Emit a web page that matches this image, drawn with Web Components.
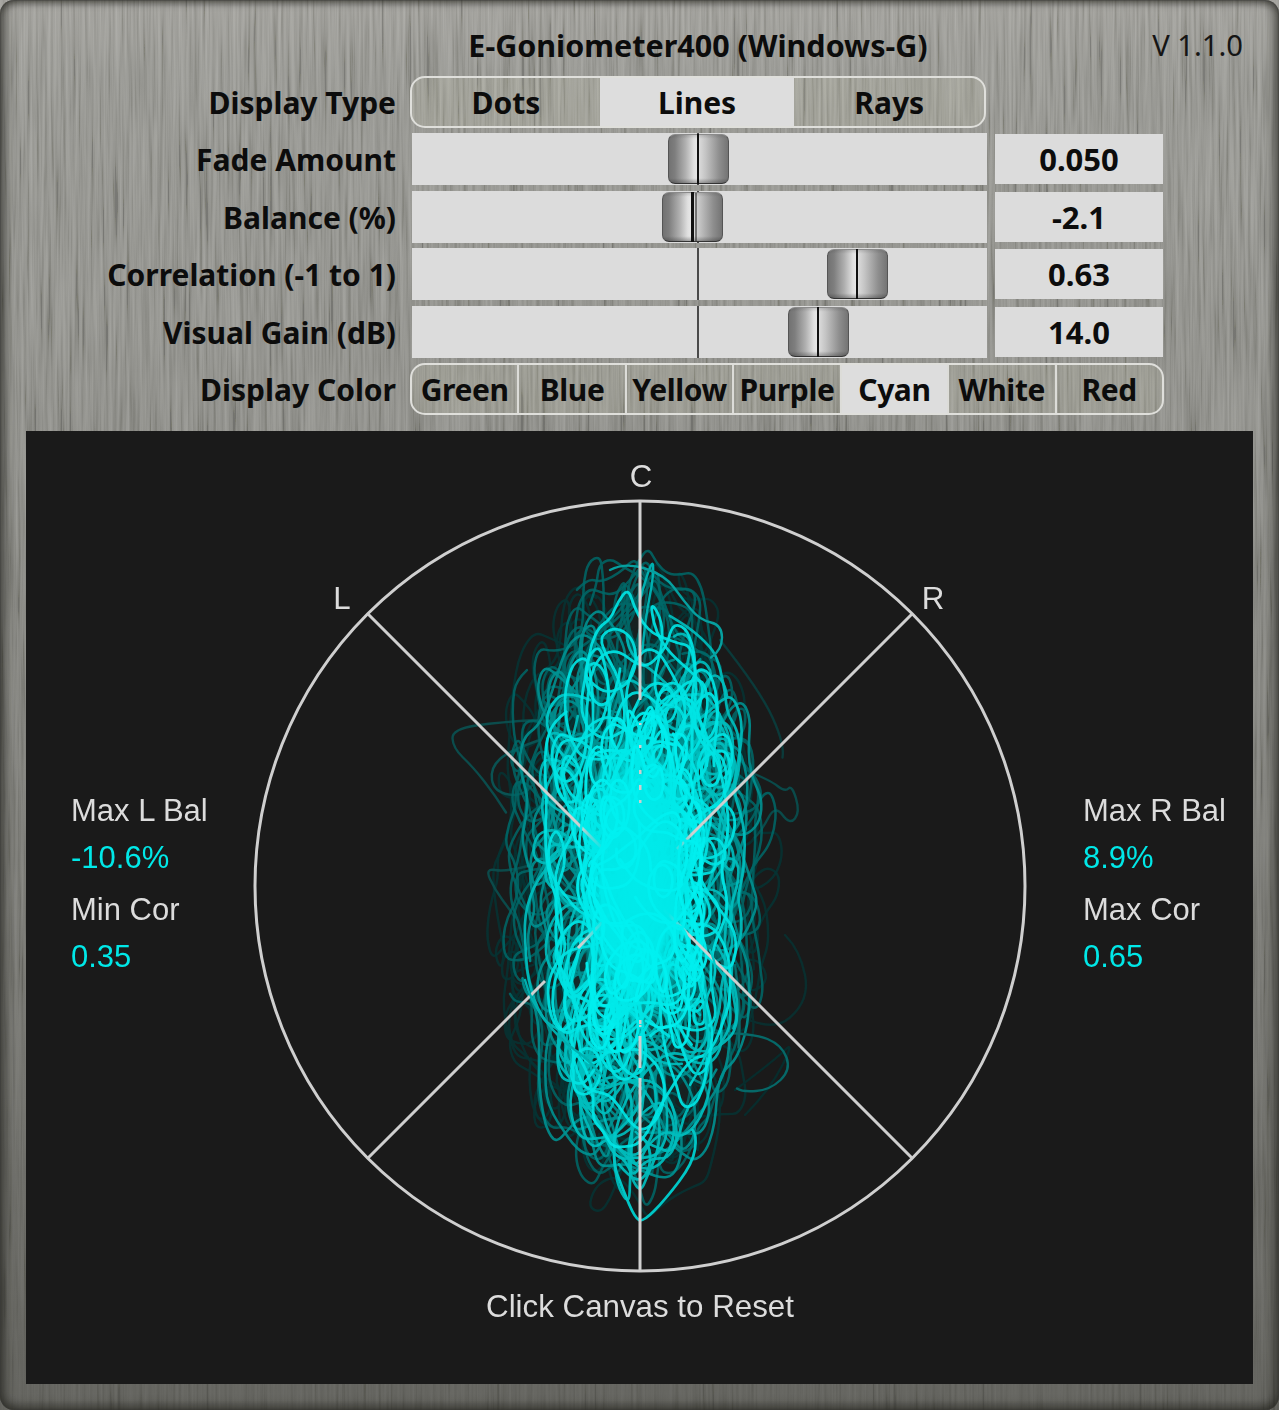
<!DOCTYPE html>
<html lang="en"><head><meta charset="utf-8"><title>E-Goniometer400</title>
<style>html,body{margin:0;padding:0;background:#555}</style></head>
<body>
<gonio-app>
  <metal-backdrop></metal-backdrop>
  <gonio-header title-text="E-Goniometer400 (Windows-G)" version="V 1.1.0"></gonio-header>
  <control-grid>
    <row-label>Display Type</row-label>
    <seg-control class="type" active="1" items="Dots,Lines,Rays" weights="188,195,190"></seg-control>
    <row-label>Fade Amount</row-label>
    <gonio-slider pos="286"></gonio-slider>
    <value-box>0.050</value-box>
    <row-label>Balance (%)</row-label>
    <gonio-slider pos="280.5" ghost></gonio-slider>
    <value-box>-2.1</value-box>
    <row-label>Correlation (-1 to 1)</row-label>
    <gonio-slider pos="445"></gonio-slider>
    <value-box>0.63</value-box>
    <row-label>Visual Gain (dB)</row-label>
    <gonio-slider pos="406"></gonio-slider>
    <value-box>14.0</value-box>
    <row-label>Display Color</row-label>
    <seg-control class="color" active="4" separators items="Green,Blue,Yellow,Purple,Cyan,White,Red"></seg-control>
  </control-grid>
  <gonio-scope></gonio-scope>
</gonio-app>
<script>
const FONT = '"Noto Sans","Open Sans","Liberation Sans",sans-serif';
function def(name, css, html, init){
  customElements.define(name, class extends HTMLElement{
    constructor(){super();this.attachShadow({mode:'open'});}
    connectedCallback(){
      this.shadowRoot.innerHTML='<style>'+css+'</style>'+(typeof html==='function'?html(this):html);
      if(init)init(this,this.shadowRoot);
    }
  });
}
def('gonio-app',`
  :host{display:block;position:relative;width:1279px;height:1410px;overflow:hidden;font-family:${FONT};color:#0c0c0c}
  .wrap{position:relative;display:flex;flex-direction:column;height:100%}
  .bevel{position:absolute;inset:0;pointer-events:none;border-radius:14px;
    box-shadow:inset 0 0 0 1px rgba(60,60,55,.3),inset 8px 0 10px -2px rgba(35,35,30,.55),inset -8px 0 10px -2px rgba(35,35,30,.55),inset 0 -7px 9px -2px rgba(35,35,30,.45),inset 0 6px 7px -3px rgba(40,40,35,.5)}
`,`<div class="wrap"><slot></slot></div><div class="bevel"></div>`);

def('metal-backdrop',`
  :host{position:absolute;inset:0;display:block;background:linear-gradient(180deg,#a09f9a 0,#969691 5%,#8f8f8a 25%,#7c7c77 55%,#5e5e59 100%)}
  svg{position:absolute;inset:0;width:100%;height:100%;opacity:.17;display:block;-webkit-mask-image:linear-gradient(180deg,#000 35%,rgba(0,0,0,.45) 100%);mask-image:linear-gradient(180deg,#000 35%,rgba(0,0,0,.45) 100%)}
`,`<svg xmlns="http://www.w3.org/2000/svg" viewBox="0 0 1279 1410" preserveAspectRatio="none">
  <filter id="brush" x="0" y="0" width="100%" height="100%">
    <feTurbulence type="fractalNoise" baseFrequency="0.33 0.008" numOctaves="3" seed="7"/>
    <feColorMatrix type="matrix" values="1.7 0 0 0 -.39  1.7 0 0 0 -.39  1.7 0 0 0 -.41  0 0 0 0 1"/>
  </filter>
  <rect width="1279" height="1410" filter="url(#brush)"/></svg>`);

def('gonio-header',`
  :host{display:grid;grid-template-columns:1fr auto 1fr;align-items:center;height:54px;padding-top:18px;padding-bottom:4px;box-sizing:content-box;position:relative}
  .t{grid-column:2;font-weight:700;font-size:30.5px;white-space:nowrap;margin-left:117px}
  .v{grid-column:3;justify-self:end;font-size:29.2px;margin-right:36px;color:#151515;white-space:nowrap}
`,h=>`<div class="t">${h.getAttribute('title-text')}</div><div class="v">${h.getAttribute('version')}</div>`);

def('control-grid',`
  :host{display:grid;grid-template-columns:396px 591px 176px;column-gap:0;grid-auto-rows:52px;row-gap:5.4px;position:relative}
  ::slotted(row-label){grid-column:1}
  ::slotted(gonio-slider){grid-column:2;margin-left:16px}
  ::slotted(value-box){grid-column:3;margin-left:8px}
  ::slotted(seg-control.type){grid-column:2;margin-left:14px;margin-right:1px}
  ::slotted(seg-control.color){grid-column:2 / span 2;margin-left:14px;margin-right:-1px}
`,`<slot></slot>`);

def('row-label',`
  :host{display:flex;justify-content:flex-end;align-items:center;font-weight:700;font-size:30px;white-space:nowrap;height:52px;padding-top:1px;box-sizing:border-box}
`,`<slot></slot>`);

def('value-box',`
  :host{display:flex;justify-content:center;align-items:center;font-weight:700;font-size:31px;background:#dcdcdc;height:50px;margin-top:1px}
`,`<slot></slot>`);

def('seg-control',`
  :host{display:block;height:52px;box-sizing:border-box;border:2px solid #dfdfdb;border-radius:15px;overflow:hidden}
  .row{display:flex;height:100%}
  .c{display:flex;align-items:center;justify-content:center;font-weight:700;font-size:30px;white-space:nowrap;background:rgba(255,255,215,.09);min-width:0;padding-top:1px;box-sizing:border-box}
  .c.on{background:#dddddd}
  .sep .c+.c{border-left:2.5px solid #dcdcd8}
  .sep{letter-spacing:-.4px}
`,h=>{
  const items=h.getAttribute('items').split(','),a=+h.getAttribute('active');
  const w=(h.getAttribute('weights')||'').split(',');
  return `<div class="row ${h.hasAttribute('separators')?'sep':''}">${items.map((t,i)=>`<div class="c ${i===a?'on':''}" style="flex:${w[i]||1} 1 0">${t}</div>`).join('')}</div>`;
});

def('gonio-slider',`
  :host{display:block;position:relative;height:52px;background:#dcdcdc}
  .mid{position:absolute;left:285px;top:0;bottom:0;width:1.6px;background:#4a4a4a}
  .thumb{position:absolute;top:1px;width:61px;height:50px;box-sizing:border-box;border-radius:7px;border:1.5px solid #555;border-top-color:#8a8a8a;border-bottom-color:#333;
    background:linear-gradient(180deg,rgba(60,60,60,.18) 0,rgba(0,0,0,0) 8%,rgba(0,0,0,0) 90%,rgba(40,40,40,.35) 100%),
    linear-gradient(90deg,#727272 0,#7e7e7e 10%,#b0b0b0 28%,#e0e0e0 42%,#e8e8e8 48%,#d6d6d6 53%,#c4c4c4 62%,#8e8e8e 85%,#747474 100%)}
  .thumb i{position:absolute;left:50%;top:-1px;bottom:-1px;width:2.2px;margin-left:-1.1px;background:#111}
  .ghost{position:absolute;left:283px;top:2px;bottom:2px;width:1.5px;background:rgba(40,40,40,.55)}
`,h=>{const p=+h.getAttribute('pos');
  return `<div class="mid"></div><div class="thumb" style="left:${p-30.5}px"><i></i></div>${h.hasAttribute('ghost')?'<div class="ghost"></div>':''}`;});

def('scope-readout',`
  :host{display:flex;flex-direction:column;font-family:"Liberation Sans",Arial,sans-serif;font-size:31px;line-height:47px;color:#dcdcdc}
  .v{color:#00e8e8}
`,h=>`<div>${h.getAttribute('label')}</div><div class="v">${h.getAttribute('value')}</div>`);

def('gonio-scope',`
  :host{display:block;position:relative;width:1227px;height:953px;margin:16px 26px 26px;background:#1a1a1a;font-family:"Liberation Sans",Arial,sans-serif;font-size:31.3px;color:#dcdcdc}
  canvas{position:absolute;inset:0;display:block}
  .tick{position:absolute;transform:translate(-50%,-50%);white-space:nowrap;line-height:1}
  .col{position:absolute;top:356px;display:flex;flex-direction:column;gap:5px}
`,`<canvas width="1227" height="953"></canvas>
  <div class="tick" style="left:615px;top:46px">C</div>
  <div class="tick" style="left:316px;top:168px">L</div>
  <div class="tick" style="left:907px;top:168px">R</div>
  <div class="col" style="left:45px"><scope-readout label="Max L Bal" value="-10.6%"></scope-readout><scope-readout label="Min Cor" value="0.35"></scope-readout></div>
  <div class="col" style="left:1057px"><scope-readout label="Max R Bal" value="8.9%"></scope-readout><scope-readout label="Max Cor" value="0.65"></scope-readout></div>
  <div class="tick" style="left:614px;top:876px">Click Canvas to Reset</div>`,
(h,s)=>drawScope(s.querySelector('canvas')));

function drawScope(cv){
  const g=cv.getContext('2d');
  g.translate(-26,-431);
  const CX=640,CY=886,R=385;
  let seed=4242;
  const rnd=()=>{seed|=0;seed=seed+0x6D2B79F5|0;let t=Math.imul(seed^seed>>>15,1|seed);t=t+Math.imul(t^t>>>7,61|t)^t;return((t^t>>>14)>>>0)/4294967296;};
  const gauss=()=>{let u=0,v=0;while(!u)u=rnd();while(!v)v=rnd();return Math.sqrt(-2*Math.log(u))*Math.cos(6.2832*v);};

  function smooth(pts){
    g.beginPath();g.moveTo(pts[0][0],pts[0][1]);
    for(let i=1;i<pts.length-1;i++){
      g.quadraticCurveTo(pts[i][0],pts[i][1],(pts[i][0]+pts[i+1][0])/2,(pts[i][1]+pts[i+1][1])/2);
    }
    g.stroke();
  }
  // a wandering, looping pen that steers back whenever it leaves a tall egg
  function burst(n,ax,ay,width,color,speed){
    g.strokeStyle=color;g.lineWidth=width;g.lineJoin='round';g.lineCap='round';
    const sc=.78+rnd()*.24, w=ax*sc, hh=ay*sc;
    const clampV=(v,m)=>Math.max(-m,Math.min(m,v));
    let x=clampV(gauss()*w*.5,w*.8),y=clampV(gauss()*hh*.55,hh*.85),th=rnd()*6.2832,om=0;
    const s=speed||14;
    const pts=[];
    for(let i=0;i<n;i++){
      om=om*.85+gauss()*.27;
      th+=om;
      const t=Math.min(1,Math.abs(y)/hh);
      const lim=w*Math.pow(1-t*t,.55)+4;
      if(Math.abs(y)>hh){
        const want=Math.atan2(-y,-x*.3);
        let d=want-th;while(d>Math.PI)d-=6.2832;while(d<-Math.PI)d+=6.2832;
        th+=d*.7;om*=.4;
      }else if(Math.abs(x)>lim){
        const want=Math.atan2(-y*.6,-x);
        let d=want-th;while(d>Math.PI)d-=6.2832;while(d<-Math.PI)d+=6.2832;
        th+=d*.42;
      }
      x+=Math.cos(th)*s*.9;
      y+=Math.sin(th)*s*1.55;
      pts.push([CX+x,CY+y]);
    }
    smooth(pts);
  }
  function hand(points,color,w){
    g.strokeStyle=color;g.lineWidth=w||2.4;g.lineJoin='round';g.lineCap='round';
    smooth(points);
  }
  function halo(cx,cy,rx,ry,stops){
    g.save();g.translate(cx,cy);g.scale(rx,ry);
    const gr=g.createRadialGradient(0,0,0,0,0,1);
    stops.forEach(s=>gr.addColorStop(s[0],s[1]));
    g.fillStyle=gr;g.beginPath();g.arc(0,0,1,0,6.2832);g.fill();g.restore();
  }
  halo(CX-2,CY-8,112,310,[[0,'rgba(0,150,150,.55)'],[.5,'rgba(0,115,115,.3)'],[1,'rgba(0,70,70,0)']]);

  // oldest, darkest strands
  for(let i=0;i<24;i++)burst(70,136,340,2.4,'rgba(6,52,52,.85)');
  hand([[537,720],[500,722],[452,729],[453,748],[473,767],[495,795],[517,830]],'#0b4c4c');
  hand([[540,740],[510,750],[490,768],[494,792],[523,797],[540,775]],'#0a5252');
  hand([[528,866],[505,872],[485,868],[495,890],[510,910],[520,925]],'#0b4a4a');
  hand([[745,770],[770,780],[785,792],[792,785],[800,812],[790,825],[775,805],[762,830],[748,845]],'#0a4a4a');
  hand([[720,640],[760,690],[785,745],[780,770]],'#0b3a3a');
  hand([[730,1010],[770,1035],[810,1000],[800,950],[770,920]],'#0a2e2e');
  hand([[735,1090],[775,1060],[795,1040],[770,1090],[720,1140]],'#082c2c');
  for(let i=0;i<26;i++)burst(60,130,338,2.5,'rgba(0,105,105,.85)');
  for(let i=0;i<22;i++)burst(55,116,335,2.6,'rgba(0,145,145,.9)');
  hand([[715,1033],[753,1033],[782,1045],[791,1070],[770,1090],[742,1092],[732,1085]],'#066868');
  hand([[735,965],[742,1010],[735,1085]],'#086a6a');

  // newer strands, brightening toward the centre
  for(let i=0;i<16;i++)burst(55,100,330,2.7,'rgba(0,190,190,.92)');
  hand([[590,700],[565,690],[548,708],[546,730],[565,760],[590,775]],'#00c4c4',2.8);
  hand([[615,1133],[612,1160],[623,1190],[635,1218],[643,1222],[665,1200],[693,1163],[697,1135],[688,1125]],'#00c6c6',2.8);
  hand([[640,600],[652,556],[654,575],[645,620],[640,680]],'#00b0b0');
  hand([[610,570],[625,562],[665,575],[683,600],[700,620],[722,625],[722,650],[700,665]],'#06a0a0');
  for(let i=0;i<18;i++)burst(50,84,290,2.8,'rgba(0,228,228,.92)');
  for(let i=0;i<18;i++)burst(45,58,195,2.8,'rgba(0,238,238,.95)',12);

  // scale lines sit over all but the hottest core
  g.strokeStyle='#cfcfcf';g.lineWidth=3;g.lineCap='butt';
  g.beginPath();g.arc(CX,CY,R,0,6.2832);g.stroke();
  const d=R*Math.SQRT1_2;
  const seg=(a,b,c,e)=>{g.moveTo(a,b);g.lineTo(c,e);};
  g.beginPath();
  seg(CX,CY-R,CX,CY-186);seg(CX,CY+150,CX,CY+182);seg(CX,CY+192,CX,CY+R);
  seg(CX-d,CY-d,CX-33,CY-33);seg(CX+d,CY-d,CX+37,CY-37);
  seg(CX-d,CY+d,CX-95,CY+95);seg(CX-62,CY+62,CX-30,CY+28);seg(CX+d,CY+d,CX+24,CY+24);
  g.stroke();

  halo(CX-4,CY-6,58,160,[[0,'rgba(0,235,235,1)'],[.6,'rgba(0,233,233,.98)'],[.85,'rgba(0,228,228,.5)'],[1,'rgba(0,220,220,0)']]);
  for(let i=0;i<8;i++)burst(40,46,125,2.8,'rgba(0,240,240,.95)',11);
  hand([[610,1085],[590,1060],[560,1040],[530,1000],[520,960]],'#00b0b0');
  hand([[690,1085],[715,1045],[700,1010],[720,970],[700,930]],'#00c8c8');

  // specks of the vertical scale showing through the bright core
  g.fillStyle='#cfcfcf';
  [[723,2],[745,3],[770,4],[785,5],[800,3],[1020,4],[1025,2]].forEach(s=>g.fillRect(CX-1,s[0],2.5,s[1]));
}
</script>
</body></html>
